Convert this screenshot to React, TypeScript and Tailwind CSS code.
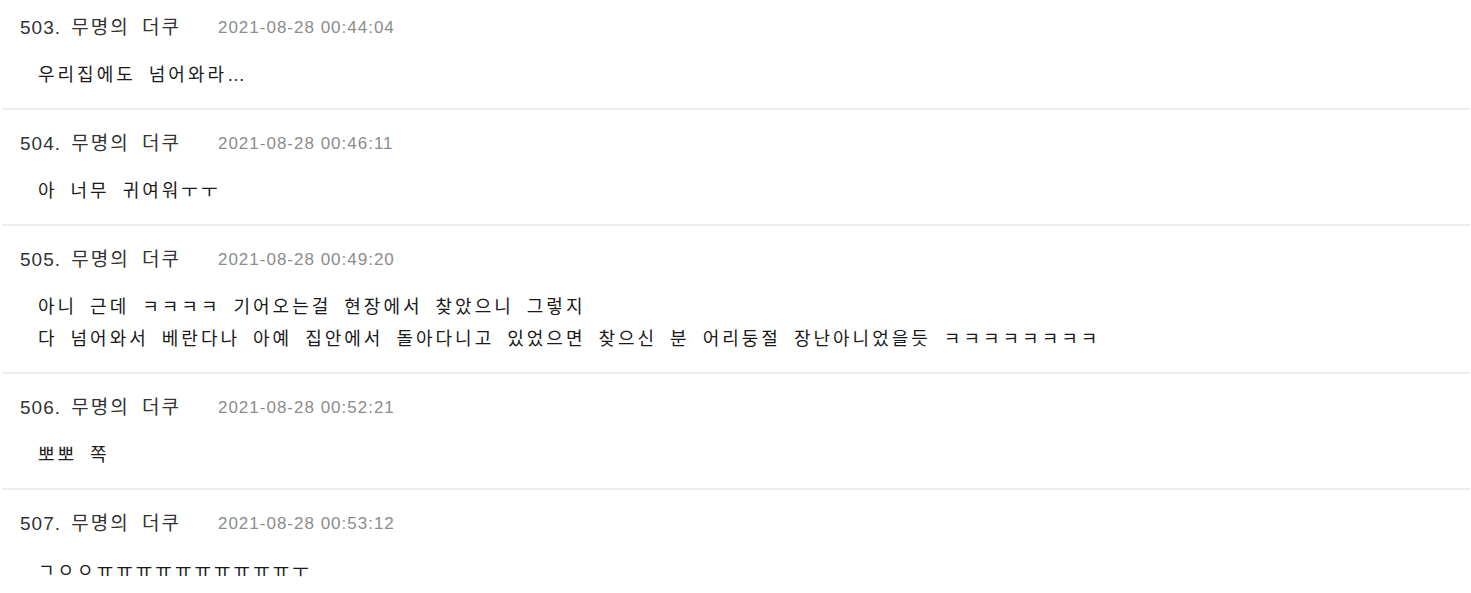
const comments = [
  { no: 503, time: "2021-08-28 00:44:04", lines: ["우리집에도 넘어와라…"] },
  { no: 504, time: "2021-08-28 00:46:11", lines: ["아 너무 귀여워ㅜㅜ"] },
  {
    no: 505,
    time: "2021-08-28 00:49:20",
    lines: [
      "아니 근데 ㅋㅋㅋㅋ 기어오는걸 현장에서 찾았으니 그렇지",
      "다 넘어와서 베란다나 아예 집안에서 돌아다니고 있었으면 찾으신 분 어리둥절 장난아니었을듯 ㅋㅋㅋㅋㅋㅋㅋㅋ",
    ],
  },
  { no: 506, time: "2021-08-28 00:52:21", lines: ["뽀뽀 쪽"] },
  { no: 507, time: "2021-08-28 00:53:12", lines: ["ㄱㅇㅇㅠㅠㅠㅠㅠㅠㅠㅠㅠㅠㅜ"] },
];

const font = "font-['Liberation_Sans','Noto_Sans_CJK_KR',sans-serif]";

export default function App() {
  return (
    <div className={`min-h-screen bg-white ${font}`}>
      <ul className="ml-[2px] mr-[1px]">
        {comments.map((c) => (
          <li
            key={c.no}
            className="border-b-2 border-[#ececec] pl-[18px] pt-[18px] pb-[17px] first:pt-[12px]"
          >
            <div className="flex items-center h-[32px]">
              <span className="text-[19px] leading-[32px] text-[#333] [word-spacing:5px]">
                <span className="tracking-[1px]">{c.no}.</span>{" "}
                <span className="tracking-[2px]">무명의 더쿠</span>
              </span>
              <span className="ml-[37px] text-[17px] leading-[32px] text-[#8c8c8c] tracking-[1px]">
                {c.time}
              </span>
            </div>
            <div className="mt-[15px] pl-[18px] text-[18px] leading-[32px] text-[#1a1a1a] tracking-[3px] [word-spacing:5px]">
              {c.lines.map((l, i) => (
                <p key={i}>{l}</p>
              ))}
            </div>
          </li>
        ))}
      </ul>
    </div>
  );
}
